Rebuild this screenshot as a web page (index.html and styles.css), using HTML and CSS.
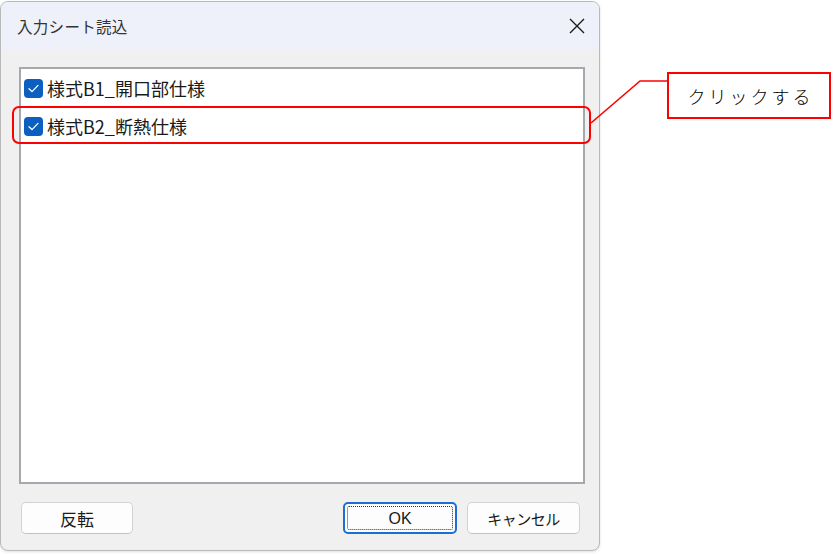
FILE: index.html
```html
<!DOCTYPE html>
<html lang="ja">
<head>
<meta charset="utf-8">
<title>入力シート読込</title>
<link rel="stylesheet" href="styles.css">
</head>
<body>
<div class="stage">
  <div class="dialog">
    <div class="titlebar">
      <span class="title">入力シート読込</span>
      <svg class="close" width="16" height="16" viewBox="0 0 16 16"><path d="M1 1 L15 15 M15 1 L1 15" stroke="#1c1c1c" stroke-width="1.4" fill="none"/></svg>
    </div>
    <div class="body">
      <div class="listbox">
        <div class="item">
          <span class="check"><svg width="19" height="19" viewBox="0 0 19 19"><path d="M5 9.8 L8 12.6 L14 6.4" stroke="#fff" stroke-width="1.3" fill="none" stroke-linecap="round" stroke-linejoin="round"/></svg></span>
          <span class="label">様式B1_開口部仕様</span>
        </div>
        <div class="item">
          <span class="check"><svg width="19" height="19" viewBox="0 0 19 19"><path d="M5 9.8 L8 12.6 L14 6.4" stroke="#fff" stroke-width="1.3" fill="none" stroke-linecap="round" stroke-linejoin="round"/></svg></span>
          <span class="label">様式B2_断熱仕様</span>
        </div>
      </div>
      <div class="buttons">
        <button class="btn btn-invert">反転</button>
        <span class="spacer"></span>
        <button class="btn btn-ok">OK</button>
        <button class="btn btn-cancel">キャンセル</button>
      </div>
    </div>
  </div>

  <div class="highlight"></div>
  <svg class="leader" width="833" height="554" viewBox="0 0 833 554"><polyline points="591,123 640,81 667,81" stroke="#ff0000" stroke-width="1.6" fill="none"/></svg>
  <div class="callout">クリックする</div>
</div>
</body>
</html>
```
FILE: styles.css
```css
html, body {
  margin: 0;
  padding: 0;
  background: #ffffff;
}

.stage {
  position: relative;
  width: 833px;
  height: 554px;
  overflow: hidden;
  font-family: "Noto Sans CJK JP", "Noto Sans", sans-serif;
}

.dialog {
  margin-top: 1px;
  width: 600px;
  height: 550px;
  box-sizing: border-box;
  border: 1px solid #b9b9b9;
  border-radius: 8px;
  background: #f0f0f0;
  display: flex;
  flex-direction: column;
  overflow: hidden;
  box-shadow: 0 1px 3px rgba(0,0,0,0.12);
}

.titlebar {
  height: 47px;
  flex: none;
  background: #eef1f9;
  display: flex;
  align-items: center;
  justify-content: space-between;
  padding: 0 14px 0 16px;
}

.title {
  font-size: 15.5px;
  color: #333333;
  letter-spacing: 0.3px;
}

.close {
  display: block;
}

.body {
  flex: 1;
  display: flex;
  flex-direction: column;
  padding: 18px 14px 0 18px;
}

.listbox {
  height: 417px;
  box-sizing: border-box;
  border: 2px solid #a5a8ac;
  background: #ffffff;
}

.item {
  height: 38px;
  display: flex;
  align-items: center;
  padding-left: 3px;
}

.check {
  width: 19px;
  height: 19px;
  border-radius: 4px;
  background: #0a5fc0;
  display: flex;
  flex: none;
}

.check svg {
  display: block;
}

.label {
  margin-left: 4px;
  font-size: 18px;
  color: #1a1a1a;
  line-height: 1;
}

.buttons {
  display: flex;
  align-items: center;
  margin-top: 18px;
  padding: 0 5px 0 2px;
}

.spacer {
  flex: 1;
}

.btn {
  height: 32px;
  box-sizing: border-box;
  border: 1px solid #d2d2d2;
  border-bottom-color: #c2c2c2;
  border-radius: 5px;
  background: #fdfdfd;
  font-family: "Noto Sans CJK JP", "Noto Sans", sans-serif;
  color: #1a1a1a;
  padding: 1px 0 0 0;
  position: relative;
}

.btn-invert {
  width: 112px;
  font-size: 17px;
}

.btn-ok {
  width: 114px;
  font-size: 16px;
  font-family: "Liberation Sans", "Noto Sans", sans-serif;
  border: 2px solid #1c6fd0;
}

.btn-ok::after {
  content: "";
  position: absolute;
  left: 2px;
  top: 2px;
  right: 2px;
  bottom: 2px;
  border: 1px dotted #333333;
  border-radius: 2px;
}

.btn-cancel {
  width: 113px;
  margin-left: 10px;
  font-size: 15px;
  letter-spacing: -0.5px;
}

.highlight {
  position: absolute;
  left: 12px;
  top: 106px;
  width: 579px;
  height: 38px;
  box-sizing: border-box;
  border: 2px solid #ff0000;
  border-radius: 7px;
}

.leader {
  position: absolute;
  left: 0;
  top: 0;
  pointer-events: none;
}

.callout {
  position: absolute;
  left: 667px;
  top: 72px;
  width: 164px;
  height: 47px;
  box-sizing: border-box;
  border: 2px solid #ff0000;
  background: #ffffff;
  display: flex;
  align-items: center;
  justify-content: center;
  font-size: 18px;
  font-weight: 300;
  letter-spacing: 3px;
  padding-left: 3px;
  color: #000000;
}
```
